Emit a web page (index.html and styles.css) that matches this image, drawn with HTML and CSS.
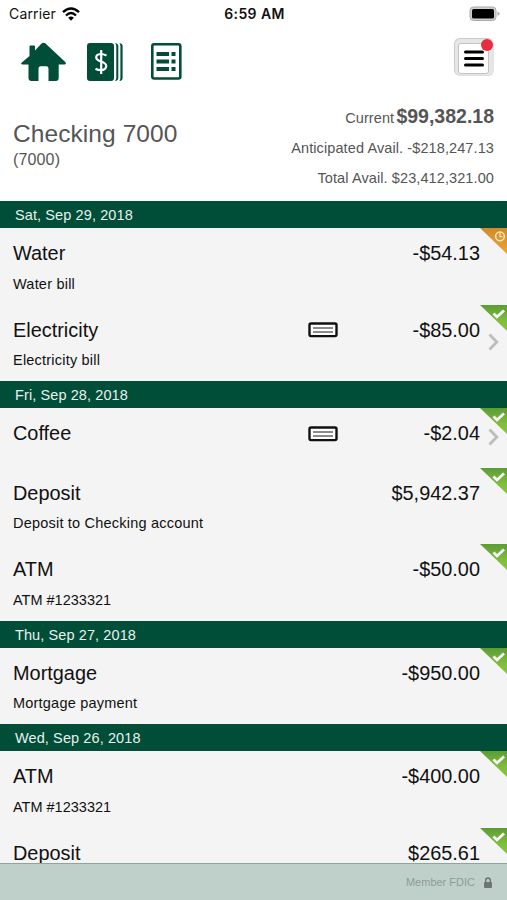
FILE: index.html
```html
<!DOCTYPE html>
<html lang="en">
<head>
    <meta charset="UTF-8">
    <meta name="viewport" content="width=device-width, initial-scale=1.0">
    <title>Checking 7000</title>
    <link rel="stylesheet" href="styles.css">
</head>
<body>
    <!-- Shared icons -->
    <svg class="sprite" width="0" height="0">
        <defs>
            <linearGradient id="green" x1="0" y1="0" x2="0" y2="1">
                <stop offset="0" stop-color="#5c9c35"/>
                <stop offset=".6" stop-color="#7fbd3c"/>
                <stop offset="1" stop-color="#86c440"/>
            </linearGradient>
            <linearGradient id="orange" x1="0" y1="0" x2="0" y2="1">
                <stop offset="0" stop-color="#d08a2a"/>
                <stop offset="1" stop-color="#eba53c"/>
            </linearGradient>
        </defs>
        <symbol id="cleared" viewBox="0 0 27 26">
            <path d="M0 0H27V26Z" fill="url(#green)"/>
            <path d="M13.5 8.5L17 12L24 5.5" fill="none" stroke="#fff" stroke-width="2.7"/>
        </symbol>
        <symbol id="pending" viewBox="0 0 27 26">
            <path d="M0 0H27V26Z" fill="url(#orange)"/>
            <circle cx="20" cy="8.3" r="4.4" fill="none" stroke="#ffe6bb" stroke-width="1.5"/>
            <path d="M20 5V8.6H22.5" fill="none" stroke="#ffe6bb" stroke-width="1.2"/>
        </symbol>
        <symbol id="check" viewBox="0 0 30 16">
            <rect x="1.5" y="1.5" width="27" height="12.6" rx="1.5" fill="#fff" stroke="#111" stroke-width="2.4"/>
            <path d="M5 6H25M5 10H25" stroke="#666" stroke-width="1.5"/>
        </symbol>
        <symbol id="arrow" viewBox="0 0 11 18">
            <path d="M1.5 1.5L8.8 9L1.5 16.5" fill="none" stroke="#bdbdbd" stroke-width="2.8"/>
        </symbol>
    </svg>

    <div class="status-bar">
        <div class="carrier">
            Carrier
            <svg width="18" height="14" viewBox="0 0 18 14">
                <path d="M1 5.2Q9 -2.2 17 5.2M4 8.5Q9 3.7 14 8.5" fill="none" stroke="#000" stroke-width="2.4"/>
                <path d="M6.2 10.8Q9 8.3 11.8 10.8L9 13.7Z"/>
            </svg>
        </div>
        <div class="time">6:59 AM</div>
        <svg class="battery" width="31" height="16" viewBox="0 0 31 16">
            <rect x="1" y="1" width="26" height="13.5" rx="3.5" fill="#d0d0d0" stroke="#aaa"/>
            <rect x="3" y="3" width="22" height="9.5" rx="1.5"/>
            <path d="M28.5 5.2L31 7.8L28.5 10.2Z" fill="#aaa"/>
        </svg>
    </div>

    <div class="toolbar">
        <svg class="home" width="46" height="40" viewBox="0 0 46 40">
            <path d="M8.5 14V4.5Q8.5 3.5 9.5 3.5H13Q14 3.5 14 4.5V8.5L20.3 1.8Q22.5 -.5 24.8 1.8L44.5 20.3Q45.5 22.5 43.5 22.5H37.7V36Q37.7 39 34.7 39H27.5V26.5Q27.5 24.3 25.3 24.3H19.7Q17.5 24.3 17.5 26.5V39H10.5Q7.5 39 7.5 36V22.5H1.5Q-.5 22.5 .5 20.7Z" fill="#004d38"/>
        </svg>
        <svg class="accounts" width="37" height="40" viewBox="0 0 37 40">
            <rect x="0" y="1" width="27" height="38" rx="3" fill="#004d38"/>
            <path d="M28 1Q31.3 1.5 31.3 4V36Q31.3 38.5 28 39Q29.3 37.5 29.3 36V4Q29.3 2.5 28 1ZM32.5 1Q35.6 1.5 35.6 4V36Q35.6 38.5 32.5 39Q33.4 37.5 33.4 36V4Q33.4 2.5 32.5 1Z" fill="#004d38"/>
            <path d="M19.5 13.5Q16 11.8 13.5 12Q9.2 12.3 9.2 15.6C9.2 20.3 19.2 18.8 19.2 24Q19.2 28 13.8 28.2Q11 28.2 8.5 26.7M14.2 8V32" fill="none" stroke="#fff" stroke-width="2.2"/>
        </svg>
        <svg class="list" width="31" height="37" viewBox="0 0 31 37">
            <rect x="1.3" y="1.3" width="28" height="34.2" rx="2" fill="#fff" stroke="#004d38" stroke-width="2.6"/>
            <path d="M5.5 11H18M20.5 11H24.5M5.5 18.5H18M20.5 18.5H24.5M5.5 26H18M20.5 26H24.5" stroke="#004d38" stroke-width="4"/>
        </svg>
        <div class="menu">
            <div class="menu-inner">
                <svg width="20" height="17" viewBox="0 0 20 17">
                    <path d="M1.5 2H18.5M1.5 8.5H18.5M1.5 15H18.5" stroke="#000" stroke-width="3" stroke-linecap="round"/>
                </svg>
            </div>
            <span class="dot"></span>
        </div>
    </div>

    <div class="account">
        <div class="account-name">
            <h1>Checking 7000</h1>
            <p>(7000)</p>
        </div>
        <div class="balances">
            <p class="current">Current <b>$99,382.18</b></p>
            <p>Anticipated Avail. -$218,247.13</p>
            <p>Total Avail. $23,412,321.00</p>
        </div>
    </div>

    <div class="transactions">
        <h2>Sat, Sep 29, 2018</h2>
        <div class="row">
            <div class="line"><span class="name">Water</span><span class="amount">-$54.13</span></div>
            <p>Water bill</p>
            <svg class="corner"><use href="#pending"/></svg>
        </div>
        <div class="row">
            <div class="line"><span class="name">Electricity</span><svg class="check"><use href="#check"/></svg><span class="amount">-$85.00</span></div>
            <p>Electricity bill</p>
            <svg class="corner"><use href="#cleared"/></svg>
            <svg class="arrow"><use href="#arrow"/></svg>
        </div>

        <h2>Fri, Sep 28, 2018</h2>
        <div class="row short">
            <div class="line"><span class="name">Coffee</span><svg class="check"><use href="#check"/></svg><span class="amount">-$2.04</span></div>
            <svg class="corner"><use href="#cleared"/></svg>
            <svg class="arrow"><use href="#arrow"/></svg>
        </div>
        <div class="row">
            <div class="line"><span class="name">Deposit</span><span class="amount">$5,942.37</span></div>
            <p>Deposit to Checking account</p>
            <svg class="corner"><use href="#cleared"/></svg>
        </div>
        <div class="row">
            <div class="line"><span class="name">ATM</span><span class="amount">-$50.00</span></div>
            <p class="number">ATM #1233321</p>
            <svg class="corner"><use href="#cleared"/></svg>
        </div>

        <h2>Thu, Sep 27, 2018</h2>
        <div class="row">
            <div class="line"><span class="name">Mortgage</span><span class="amount">-$950.00</span></div>
            <p>Mortgage payment</p>
            <svg class="corner"><use href="#cleared"/></svg>
        </div>

        <h2>Wed, Sep 26, 2018</h2>
        <div class="row">
            <div class="line"><span class="name">ATM</span><span class="amount">-$400.00</span></div>
            <p class="number">ATM #1233321</p>
            <svg class="corner"><use href="#cleared"/></svg>
        </div>
        <div class="row">
            <div class="line"><span class="name">Deposit</span><span class="amount">$265.61</span></div>
            <svg class="corner"><use href="#cleared"/></svg>
        </div>
    </div>

    <div class="footer">
        Member FDIC
        <svg width="8" height="11" viewBox="0 0 8 11">
            <rect y="5" width="8" height="6" rx="1" fill="#6c7672"/>
            <path d="M1.7 5V3.3Q1.7 1 4 1T6.3 3.3V5" fill="none" stroke="#6c7672" stroke-width="1.5"/>
        </svg>
    </div>
</body>
</html>
```
FILE: styles.css
```css
* {
    box-sizing: border-box;
}
body {
    display: flex;
    flex-direction: column;
    height: 900px;
    margin: 0;
    overflow: hidden;
    background: #fff;
    color: #111;
    font-family: "Liberation Sans", Arial, sans-serif;
}
h1, h2, p {
    margin: 0;
    font-weight: normal;
}
.sprite {
    position: absolute;
}
.status-bar {
    display: grid;
    grid-template-columns: 1fr auto 1fr;
    align-items: center;
    height: 27px;
    padding: 0 7px 0 9px;
    font-family: Inter, "Liberation Sans", sans-serif;
    font-size: 14px;
}
.carrier {
    display: flex;
    align-items: center;
    gap: 6px;
    letter-spacing: 0.15px;
}
.time {
    font-weight: 600;
    letter-spacing: 0.4px;
}
.battery {
    justify-self: end;
}
.toolbar {
    display: flex;
    align-items: center;
    height: 69px;
    padding: 0 13px 0 21px;
}
.accounts {
    margin-left: 20px;
}
.list {
    margin-left: 27px;
}
.menu {
    position: relative;
    width: 40px;
    height: 38px;
    margin: -9px 0 0 auto;
    padding: 4px 4px 1px 3px;
    border: 1px solid #ccc;
    border-right-color: #e4e4e4;
    border-bottom-color: #ddd;
    border-radius: 6px;
    background: #e6e6e6;
}
.menu-inner {
    display: flex;
    align-items: center;
    justify-content: center;
    height: 31px;
    border: 1px solid #c4c4c4;
    border-radius: 3px;
    background: #fff;
}
.dot {
    position: absolute;
    top: 0;
    right: 0;
    width: 12px;
    height: 12px;
    border-radius: 50%;
    background: #e62c3e;
}
.account {
    display: flex;
    justify-content: space-between;
    height: 105px;
    padding: 0 13px;
    color: #555;
}
.account-name {
    padding-top: 22px;
}
.account-name h1 {
    font-size: 24.5px;
    line-height: 31px;
    letter-spacing: 0.08px;
}
.account-name p {
    font-size: 16px;
    line-height: 22px;
    letter-spacing: 0.15px;
}
.balances {
    padding-top: 5px;
    font-size: 14.5px;
    line-height: 30px;
    letter-spacing: 0.1px;
    text-align: right;
}
.balances .current {
    word-spacing: -2px;
}
.balances b {
    font-size: 19.5px;
    letter-spacing: 0;
}
.transactions {
    flex: 1;
    overflow: hidden;
}
.transactions h2 {
    height: 27px;
    padding-left: 15px;
    background: #004d38;
    color: #e9f0ed;
    font-size: 14.5px;
    line-height: 29px;
    letter-spacing: 0.1px;
}
.row {
    position: relative;
    height: 76.5px;
    padding: 10.5px 27px 0 13px;
    background: #f4f4f4;
}
.row.short {
    height: 59.7px;
}
.line {
    display: grid;
    grid-template-columns: 295px 30px 1fr;
    align-items: center;
    height: 30px;
    font-size: 19.9px;
}
.amount {
    grid-column: 3;
    text-align: right;
}
.check {
    width: 30px;
    height: 16px;
}
.row p {
    font-size: 14.5px;
    line-height: 30px;
    letter-spacing: 0.21px;
}
.row .number {
    letter-spacing: 0;
}
.corner {
    position: absolute;
    top: 0;
    right: 0;
    width: 27px;
    height: 26px;
}
.arrow {
    position: absolute;
    top: 28px;
    right: 8px;
    width: 11px;
    height: 18px;
}
.short .arrow {
    top: 20px;
}
.footer {
    display: flex;
    align-items: center;
    justify-content: flex-end;
    gap: 9px;
    height: 37px;
    padding-right: 15px;
    border-top: 1px solid #92a39c;
    background: #bfd0ca;
    color: #8e9b96;
    font-size: 11px;
}
```
